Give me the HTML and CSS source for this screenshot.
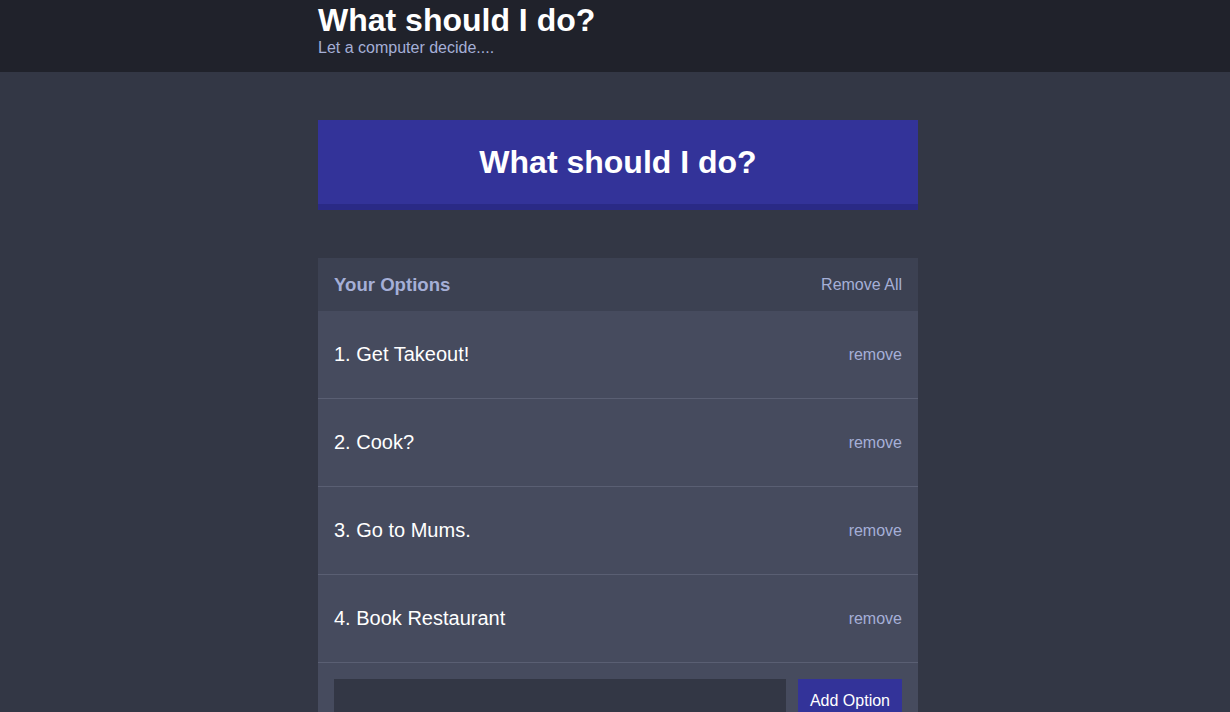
FILE: index.html
```html
<!DOCTYPE html>
<html lang="en">
<head>
<meta charset="utf-8">
<title>Indecision</title>
<link rel="stylesheet" href="styles.css">
</head>
<body>
  <header class="header">
    <div class="container">
      <h1 class="header__title">What should I do?</h1>
      <h2 class="header__subtitle">Let a computer decide....</h2>
    </div>
  </header>
  <main class="container">
    <button class="big-button">What should I do?</button>
    <div class="widget">
      <div class="widget-header">
        <h3 class="widget-header__title">Your Options</h3>
        <button class="button button--link">Remove All</button>
      </div>
      <div class="option">
        <p class="option__text">1. Get Takeout!</p>
        <button class="button button--link">remove</button>
      </div>
      <div class="option">
        <p class="option__text">2. Cook?</p>
        <button class="button button--link">remove</button>
      </div>
      <div class="option">
        <p class="option__text">3. Go to Mums.</p>
        <button class="button button--link">remove</button>
      </div>
      <div class="option">
        <p class="option__text">4. Book Restaurant</p>
        <button class="button button--link">remove</button>
      </div>
      <form class="add-option">
        <input class="add-option__input" type="text" name="option">
        <button class="button" type="button">Add Option</button>
      </form>
    </div>
  </main>
</body>
</html>
```
FILE: styles.css
```css
* { box-sizing: border-box; }

html, body {
  margin: 0;
  padding: 0;
}

body {
  background: #333745;
  font-family: "Liberation Sans", Arial, Helvetica, sans-serif;
  color: #ffffff;
}

.container {
  width: 606px;
  padding-left: 6px;
  margin: 0 auto;
}

.header {
  background: #20222b;
  height: 72px;
  padding-top: 2px;
  margin-bottom: 48px;
}

.header__title {
  margin: 0;
  font-size: 32px;
  font-weight: bold;
  line-height: 37px;
  color: #ffffff;
}

.header__subtitle {
  margin: 0;
  font-size: 16px;
  font-weight: normal;
  line-height: 18px;
  color: #a5afd7;
}

.big-button {
  display: block;
  width: 100%;
  background: #333399;
  border: none;
  border-bottom: 6px solid #2a2a86;
  color: #ffffff;
  font-family: inherit;
  font-weight: bold;
  font-size: 32px;
  line-height: 36px;
  padding: 24px 0;
  margin: 0 0 48px;
  cursor: pointer;
}

.widget {
  background: #464b5e;
}

.widget-header {
  background: #3c4152;
  display: flex;
  justify-content: space-between;
  align-items: center;
  padding: 16px;
  height: 53px;
}

.widget-header__title {
  margin: 0;
  font-size: 18.6px;
  font-weight: bold;
  line-height: 20px;
  color: #a5afd7;
}

.button {
  background: #333399;
  border: none;
  color: #ffffff;
  font-family: inherit;
  font-size: 16px;
  line-height: 18px;
  padding: 12px;
  cursor: pointer;
}

.button--link {
  background: none;
  color: #a5afd7;
  padding: 0;
}

.option {
  display: flex;
  justify-content: space-between;
  align-items: center;
  padding: 32px 16px;
  border-bottom: 1px solid #5a5f73;
}

.option__text {
  margin: 0;
  font-size: 20px;
  line-height: 23px;
  color: #ffffff;
}

.add-option {
  display: flex;
  gap: 12px;
  padding: 16px;
  margin: 0;
}

.add-option__input {
  flex: 1;
  background: #333745;
  border: none;
  border-bottom: 1px solid #2a2d38;
  color: #a5afd7;
  font-family: inherit;
  font-size: 16px;
  padding: 12px;
}
```
